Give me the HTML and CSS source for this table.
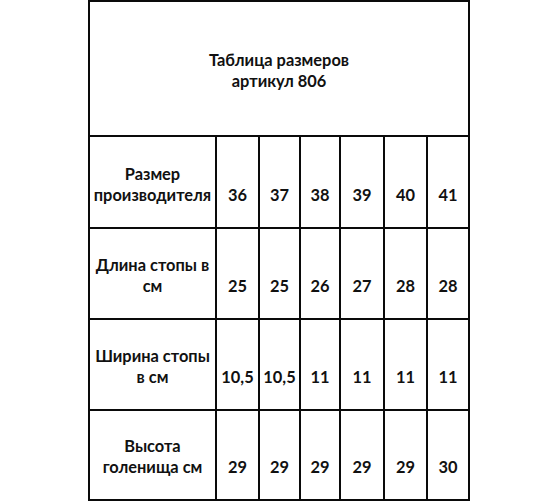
FILE: index.html
```html
<!DOCTYPE html>
<html lang="ru">
<head>
<meta charset="utf-8">
<title>Таблица размеров</title>
<link rel="stylesheet" href="styles.css">
</head>
<body>
<table class="sizes">
  <colgroup>
    <col class="c-label">
    <col class="c1">
    <col class="c2">
    <col class="c3">
    <col class="c4">
    <col class="c5">
    <col class="c6">
  </colgroup>
  <tr class="r-title">
    <td colspan="7" class="title">Таблица размеров<br>артикул 806</td>
  </tr>
  <tr class="r2">
    <td class="label">Размер<br>производителя</td>
    <td>36</td><td>37</td><td>38</td><td>39</td><td>40</td><td>41</td>
  </tr>
  <tr class="r3">
    <td class="label">Длина стопы в<br>см</td>
    <td>25</td><td>25</td><td>26</td><td>27</td><td>28</td><td>28</td>
  </tr>
  <tr class="r4">
    <td class="label">Ширина стопы<br>в см</td>
    <td>10,5</td><td>10,5</td><td>11</td><td>11</td><td>11</td><td>11</td>
  </tr>
  <tr class="r5">
    <td class="label">Высота<br>голенища см</td>
    <td>29</td><td>29</td><td>29</td><td>29</td><td>29</td><td>30</td>
  </tr>
</table>
</body>
</html>
```

FILE: styles.css
```css
html, body {
  margin: 0;
  padding: 0;
  background: #ffffff;
}
body {
  display: flex;
  justify-content: center;
  padding-right: 2px;
  font-family: Lato, "Open Sans", "Liberation Sans", sans-serif;
  font-weight: 700;
  font-size: 16.4px;
  color: #111111;
}
.sizes {
  border-collapse: collapse;
  table-layout: fixed;
  width: 382px;
}
.sizes td {
  border: 2px solid #0a0a0a;
  padding: 0 0 22px 0;
  text-align: center;
  vertical-align: bottom;
  line-height: 21px;
  white-space: nowrap;
}
.sizes td.title {
  vertical-align: middle;
  padding: 2px 0 0 0;
}
.c-label { width: 127px; }
.c1 { width: 43px; }
.c2 { width: 41px; }
.c3 { width: 40px; }
.c4 { width: 44px; }
.c5 { width: 43px; }
.c6 { width: 42px; }
.r-title { height: 135px; }
.r2 { height: 92px; }
.r3 { height: 91px; }
.r4 { height: 91px; }
.r5 { height: 90px; }
```
